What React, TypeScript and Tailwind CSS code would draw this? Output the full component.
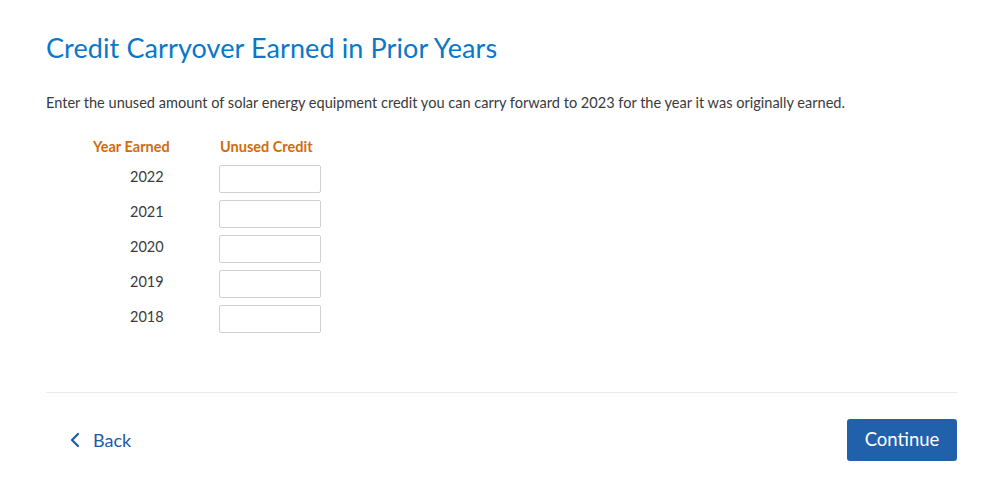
import React from "react";

export default function App() {
  const years = ["2022", "2021", "2020", "2019", "2018"];
  return (
    <div className="w-[998px] h-[503px] bg-white" style={{ fontFamily: "Lato, 'Noto Sans', sans-serif" }}>
      <div className="pl-[46px] pr-[41px] pt-[32px]">
        <h1 className="text-[27px] leading-[32px] text-[#0a77c9] font-normal tracking-[0.1px]">
          Credit Carryover Earned in Prior Years
        </h1>
        <p className="mt-[29px] text-[14.55px] leading-[20px] text-[#393a3d]">
          Enter the unused amount of solar energy equipment credit you can carry forward to 2023 for the year it was originally earned.
        </p>
        <div className="ml-[47px] mt-[24px]">
          <div className="flex text-[14.5px] leading-[20px] font-bold text-[#d36b0c]">
            <div className="w-[127px]">Year Earned</div>
            <div>Unused Credit</div>
          </div>
          <div className="mt-[8px] flex flex-col gap-[7px]">
            {years.map((y) => (
              <div key={y} className="flex items-start">
                <div className="w-[126px] pl-[37px] text-[14.5px] leading-[24px] text-[#393a3d]">{y}</div>
                <input className="w-[102px] h-[28px] border border-[#cfd0d2] rounded-[2px] bg-white outline-none" />
              </div>
            ))}
          </div>
        </div>
        <div className="mt-[59px] h-px bg-[#ebebeb]" />
        <div className="flex items-center justify-between pt-[26px]">
          <button className="flex items-center gap-[13px] pl-[24px] text-[#1c5ba6] text-[18px]">
            <svg width="10" height="16" viewBox="0 0 10 16" fill="none">
              <path d="M8 2L2 8l6 6" stroke="#1c5ba6" strokeWidth="2.2" strokeLinecap="round" strokeLinejoin="round" />
            </svg>
            <span>Back</span>
          </button>
          <button className="w-[110px] h-[42px] rounded-[3px] bg-[#2161ab] text-white text-[18.5px]">
            Continue
          </button>
        </div>
      </div>
    </div>
  );
}
